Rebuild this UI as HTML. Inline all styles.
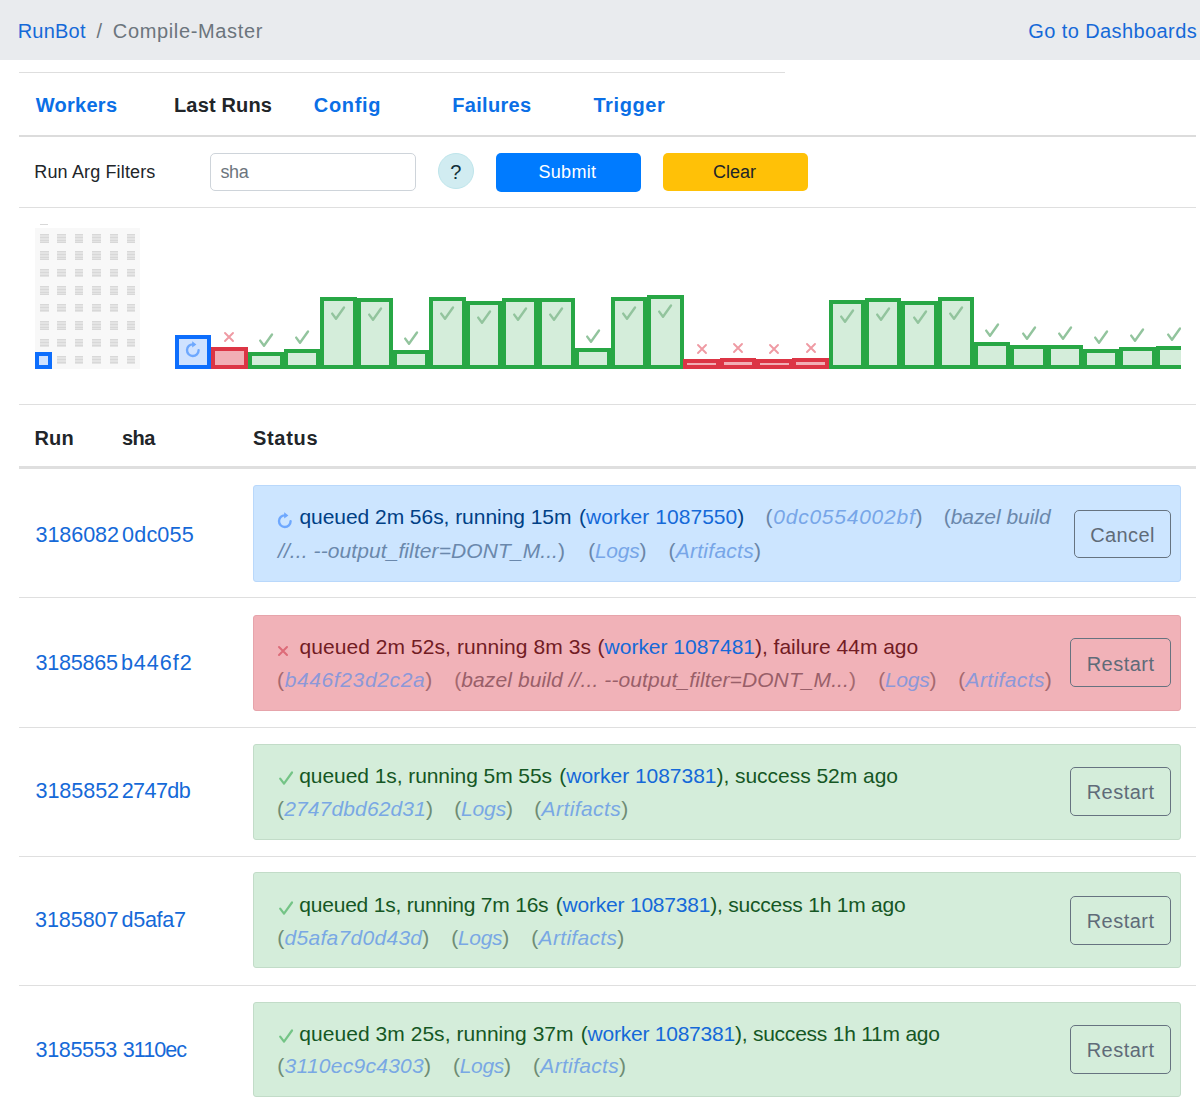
<!DOCTYPE html>
<html><head><meta charset="utf-8">
<style>
html,body{margin:0;padding:0;background:#fff;}
body{width:1200px;height:1108px;overflow:hidden;position:relative;font-family:"Liberation Sans",sans-serif;}
.t{position:absolute;white-space:pre;font-family:"Liberation Sans",sans-serif;}
</style></head><body>
<div style="position:absolute;left:0;top:0;width:1200px;height:59.8px;background:#e9ebee"></div>
<div style="position:absolute;left:19px;top:71.5px;width:766px;height:1.4px;box-sizing:border-box;background:#dedede"></div>
<div style="position:absolute;left:19px;top:134.6px;width:1177px;height:2px;box-sizing:border-box;background:#dcdcdc"></div>
<div style="position:absolute;left:19px;top:206.8px;width:1177px;height:1.4px;box-sizing:border-box;background:#dfdfdf"></div>
<div style="position:absolute;left:19px;top:403.8px;width:1177px;height:1.4px;box-sizing:border-box;background:#dfdfdf"></div>
<div style="position:absolute;left:19px;top:466.3px;width:1177px;height:2.7px;box-sizing:border-box;background:#dfdfdf"></div>
<div style="position:absolute;left:19px;top:597.0px;width:1177px;height:1.4px;box-sizing:border-box;background:#dfdfdf"></div>
<div style="position:absolute;left:19px;top:726.6px;width:1177px;height:1.4px;box-sizing:border-box;background:#dfdfdf"></div>
<div style="position:absolute;left:19px;top:855.6px;width:1177px;height:1.4px;box-sizing:border-box;background:#dfdfdf"></div>
<div style="position:absolute;left:19px;top:984.8px;width:1177px;height:1.4px;box-sizing:border-box;background:#dfdfdf"></div>
<div style="position:absolute;left:210px;top:153px;width:205.5px;height:38.3px;box-sizing:border-box;border:1.4px solid #ced4da;border-radius:5px;background:#fff"></div>
<div style="position:absolute;left:437.7px;top:153px;width:36px;height:36px;box-sizing:border-box;border:1.3px solid #bee5eb;border-radius:50%;background:#d1ecf1"></div>
<div style="position:absolute;left:496px;top:153px;width:145px;height:38.5px;box-sizing:border-box;border-radius:5px;background:#007bff"></div>
<div style="position:absolute;left:663px;top:153px;width:145px;height:38.3px;box-sizing:border-box;border-radius:5px;background:#ffc107"></div>
<div style="position:absolute;left:35px;top:228.4px;width:104.5px;height:140.2px;box-sizing:border-box;background:#f8f8f8"></div>
<div style="position:absolute;left:40px;top:224px;width:8px;height:1.2px;box-sizing:border-box;background:#d8d8d8"></div>
<div style="position:absolute;left:40.1px;top:234px;width:8.5px;height:8.5px;box-sizing:border-box;background:repeating-linear-gradient(180deg,#d8d8d8 0px,#d8d8d8 1.4px,#e4e4e4 1.4px,#e4e4e4 2.8px)"></div>
<div style="position:absolute;left:57.4px;top:234px;width:8.5px;height:8.5px;box-sizing:border-box;background:repeating-linear-gradient(180deg,#d8d8d8 0px,#d8d8d8 1.4px,#e4e4e4 1.4px,#e4e4e4 2.8px)"></div>
<div style="position:absolute;left:74.8px;top:234px;width:8.5px;height:8.5px;box-sizing:border-box;background:repeating-linear-gradient(180deg,#d8d8d8 0px,#d8d8d8 1.4px,#e4e4e4 1.4px,#e4e4e4 2.8px)"></div>
<div style="position:absolute;left:92.1px;top:234px;width:8.5px;height:8.5px;box-sizing:border-box;background:repeating-linear-gradient(180deg,#d8d8d8 0px,#d8d8d8 1.4px,#e4e4e4 1.4px,#e4e4e4 2.8px)"></div>
<div style="position:absolute;left:109.5px;top:234px;width:8.5px;height:8.5px;box-sizing:border-box;background:repeating-linear-gradient(180deg,#d8d8d8 0px,#d8d8d8 1.4px,#e4e4e4 1.4px,#e4e4e4 2.8px)"></div>
<div style="position:absolute;left:126.9px;top:234px;width:8.5px;height:8.5px;box-sizing:border-box;background:repeating-linear-gradient(180deg,#d8d8d8 0px,#d8d8d8 1.4px,#e4e4e4 1.4px,#e4e4e4 2.8px)"></div>
<div style="position:absolute;left:40.1px;top:251.4px;width:8.5px;height:8.5px;box-sizing:border-box;background:repeating-linear-gradient(180deg,#d8d8d8 0px,#d8d8d8 1.4px,#e4e4e4 1.4px,#e4e4e4 2.8px)"></div>
<div style="position:absolute;left:57.4px;top:251.4px;width:8.5px;height:8.5px;box-sizing:border-box;background:repeating-linear-gradient(180deg,#d8d8d8 0px,#d8d8d8 1.4px,#e4e4e4 1.4px,#e4e4e4 2.8px)"></div>
<div style="position:absolute;left:74.8px;top:251.4px;width:8.5px;height:8.5px;box-sizing:border-box;background:repeating-linear-gradient(180deg,#d8d8d8 0px,#d8d8d8 1.4px,#e4e4e4 1.4px,#e4e4e4 2.8px)"></div>
<div style="position:absolute;left:92.1px;top:251.4px;width:8.5px;height:8.5px;box-sizing:border-box;background:repeating-linear-gradient(180deg,#d8d8d8 0px,#d8d8d8 1.4px,#e4e4e4 1.4px,#e4e4e4 2.8px)"></div>
<div style="position:absolute;left:109.5px;top:251.4px;width:8.5px;height:8.5px;box-sizing:border-box;background:repeating-linear-gradient(180deg,#d8d8d8 0px,#d8d8d8 1.4px,#e4e4e4 1.4px,#e4e4e4 2.8px)"></div>
<div style="position:absolute;left:126.9px;top:251.4px;width:8.5px;height:8.5px;box-sizing:border-box;background:repeating-linear-gradient(180deg,#d8d8d8 0px,#d8d8d8 1.4px,#e4e4e4 1.4px,#e4e4e4 2.8px)"></div>
<div style="position:absolute;left:40.1px;top:268.9px;width:8.5px;height:8.5px;box-sizing:border-box;background:repeating-linear-gradient(180deg,#d8d8d8 0px,#d8d8d8 1.4px,#e4e4e4 1.4px,#e4e4e4 2.8px)"></div>
<div style="position:absolute;left:57.4px;top:268.9px;width:8.5px;height:8.5px;box-sizing:border-box;background:repeating-linear-gradient(180deg,#d8d8d8 0px,#d8d8d8 1.4px,#e4e4e4 1.4px,#e4e4e4 2.8px)"></div>
<div style="position:absolute;left:74.8px;top:268.9px;width:8.5px;height:8.5px;box-sizing:border-box;background:repeating-linear-gradient(180deg,#d8d8d8 0px,#d8d8d8 1.4px,#e4e4e4 1.4px,#e4e4e4 2.8px)"></div>
<div style="position:absolute;left:92.1px;top:268.9px;width:8.5px;height:8.5px;box-sizing:border-box;background:repeating-linear-gradient(180deg,#d8d8d8 0px,#d8d8d8 1.4px,#e4e4e4 1.4px,#e4e4e4 2.8px)"></div>
<div style="position:absolute;left:109.5px;top:268.9px;width:8.5px;height:8.5px;box-sizing:border-box;background:repeating-linear-gradient(180deg,#d8d8d8 0px,#d8d8d8 1.4px,#e4e4e4 1.4px,#e4e4e4 2.8px)"></div>
<div style="position:absolute;left:126.9px;top:268.9px;width:8.5px;height:8.5px;box-sizing:border-box;background:repeating-linear-gradient(180deg,#d8d8d8 0px,#d8d8d8 1.4px,#e4e4e4 1.4px,#e4e4e4 2.8px)"></div>
<div style="position:absolute;left:40.1px;top:286.3px;width:8.5px;height:8.5px;box-sizing:border-box;background:repeating-linear-gradient(180deg,#d8d8d8 0px,#d8d8d8 1.4px,#e4e4e4 1.4px,#e4e4e4 2.8px)"></div>
<div style="position:absolute;left:57.4px;top:286.3px;width:8.5px;height:8.5px;box-sizing:border-box;background:repeating-linear-gradient(180deg,#d8d8d8 0px,#d8d8d8 1.4px,#e4e4e4 1.4px,#e4e4e4 2.8px)"></div>
<div style="position:absolute;left:74.8px;top:286.3px;width:8.5px;height:8.5px;box-sizing:border-box;background:repeating-linear-gradient(180deg,#d8d8d8 0px,#d8d8d8 1.4px,#e4e4e4 1.4px,#e4e4e4 2.8px)"></div>
<div style="position:absolute;left:92.1px;top:286.3px;width:8.5px;height:8.5px;box-sizing:border-box;background:repeating-linear-gradient(180deg,#d8d8d8 0px,#d8d8d8 1.4px,#e4e4e4 1.4px,#e4e4e4 2.8px)"></div>
<div style="position:absolute;left:109.5px;top:286.3px;width:8.5px;height:8.5px;box-sizing:border-box;background:repeating-linear-gradient(180deg,#d8d8d8 0px,#d8d8d8 1.4px,#e4e4e4 1.4px,#e4e4e4 2.8px)"></div>
<div style="position:absolute;left:126.9px;top:286.3px;width:8.5px;height:8.5px;box-sizing:border-box;background:repeating-linear-gradient(180deg,#d8d8d8 0px,#d8d8d8 1.4px,#e4e4e4 1.4px,#e4e4e4 2.8px)"></div>
<div style="position:absolute;left:40.1px;top:303.7px;width:8.5px;height:8.5px;box-sizing:border-box;background:repeating-linear-gradient(180deg,#d8d8d8 0px,#d8d8d8 1.4px,#e4e4e4 1.4px,#e4e4e4 2.8px)"></div>
<div style="position:absolute;left:57.4px;top:303.7px;width:8.5px;height:8.5px;box-sizing:border-box;background:repeating-linear-gradient(180deg,#d8d8d8 0px,#d8d8d8 1.4px,#e4e4e4 1.4px,#e4e4e4 2.8px)"></div>
<div style="position:absolute;left:74.8px;top:303.7px;width:8.5px;height:8.5px;box-sizing:border-box;background:repeating-linear-gradient(180deg,#d8d8d8 0px,#d8d8d8 1.4px,#e4e4e4 1.4px,#e4e4e4 2.8px)"></div>
<div style="position:absolute;left:92.1px;top:303.7px;width:8.5px;height:8.5px;box-sizing:border-box;background:repeating-linear-gradient(180deg,#d8d8d8 0px,#d8d8d8 1.4px,#e4e4e4 1.4px,#e4e4e4 2.8px)"></div>
<div style="position:absolute;left:109.5px;top:303.7px;width:8.5px;height:8.5px;box-sizing:border-box;background:repeating-linear-gradient(180deg,#d8d8d8 0px,#d8d8d8 1.4px,#e4e4e4 1.4px,#e4e4e4 2.8px)"></div>
<div style="position:absolute;left:126.9px;top:303.7px;width:8.5px;height:8.5px;box-sizing:border-box;background:repeating-linear-gradient(180deg,#d8d8d8 0px,#d8d8d8 1.4px,#e4e4e4 1.4px,#e4e4e4 2.8px)"></div>
<div style="position:absolute;left:40.1px;top:321.1px;width:8.5px;height:8.5px;box-sizing:border-box;background:repeating-linear-gradient(180deg,#d8d8d8 0px,#d8d8d8 1.4px,#e4e4e4 1.4px,#e4e4e4 2.8px)"></div>
<div style="position:absolute;left:57.4px;top:321.1px;width:8.5px;height:8.5px;box-sizing:border-box;background:repeating-linear-gradient(180deg,#d8d8d8 0px,#d8d8d8 1.4px,#e4e4e4 1.4px,#e4e4e4 2.8px)"></div>
<div style="position:absolute;left:74.8px;top:321.1px;width:8.5px;height:8.5px;box-sizing:border-box;background:repeating-linear-gradient(180deg,#d8d8d8 0px,#d8d8d8 1.4px,#e4e4e4 1.4px,#e4e4e4 2.8px)"></div>
<div style="position:absolute;left:92.1px;top:321.1px;width:8.5px;height:8.5px;box-sizing:border-box;background:repeating-linear-gradient(180deg,#d8d8d8 0px,#d8d8d8 1.4px,#e4e4e4 1.4px,#e4e4e4 2.8px)"></div>
<div style="position:absolute;left:109.5px;top:321.1px;width:8.5px;height:8.5px;box-sizing:border-box;background:repeating-linear-gradient(180deg,#d8d8d8 0px,#d8d8d8 1.4px,#e4e4e4 1.4px,#e4e4e4 2.8px)"></div>
<div style="position:absolute;left:126.9px;top:321.1px;width:8.5px;height:8.5px;box-sizing:border-box;background:repeating-linear-gradient(180deg,#d8d8d8 0px,#d8d8d8 1.4px,#e4e4e4 1.4px,#e4e4e4 2.8px)"></div>
<div style="position:absolute;left:40.1px;top:338.5px;width:8.5px;height:8.5px;box-sizing:border-box;background:repeating-linear-gradient(180deg,#d8d8d8 0px,#d8d8d8 1.4px,#e4e4e4 1.4px,#e4e4e4 2.8px)"></div>
<div style="position:absolute;left:57.4px;top:338.5px;width:8.5px;height:8.5px;box-sizing:border-box;background:repeating-linear-gradient(180deg,#d8d8d8 0px,#d8d8d8 1.4px,#e4e4e4 1.4px,#e4e4e4 2.8px)"></div>
<div style="position:absolute;left:74.8px;top:338.5px;width:8.5px;height:8.5px;box-sizing:border-box;background:repeating-linear-gradient(180deg,#d8d8d8 0px,#d8d8d8 1.4px,#e4e4e4 1.4px,#e4e4e4 2.8px)"></div>
<div style="position:absolute;left:92.1px;top:338.5px;width:8.5px;height:8.5px;box-sizing:border-box;background:repeating-linear-gradient(180deg,#d8d8d8 0px,#d8d8d8 1.4px,#e4e4e4 1.4px,#e4e4e4 2.8px)"></div>
<div style="position:absolute;left:109.5px;top:338.5px;width:8.5px;height:8.5px;box-sizing:border-box;background:repeating-linear-gradient(180deg,#d8d8d8 0px,#d8d8d8 1.4px,#e4e4e4 1.4px,#e4e4e4 2.8px)"></div>
<div style="position:absolute;left:126.9px;top:338.5px;width:8.5px;height:8.5px;box-sizing:border-box;background:repeating-linear-gradient(180deg,#d8d8d8 0px,#d8d8d8 1.4px,#e4e4e4 1.4px,#e4e4e4 2.8px)"></div>
<div style="position:absolute;left:57.4px;top:355.9px;width:8.5px;height:8.5px;box-sizing:border-box;background:repeating-linear-gradient(180deg,#d8d8d8 0px,#d8d8d8 1.4px,#e4e4e4 1.4px,#e4e4e4 2.8px)"></div>
<div style="position:absolute;left:74.8px;top:355.9px;width:8.5px;height:8.5px;box-sizing:border-box;background:repeating-linear-gradient(180deg,#d8d8d8 0px,#d8d8d8 1.4px,#e4e4e4 1.4px,#e4e4e4 2.8px)"></div>
<div style="position:absolute;left:92.1px;top:355.9px;width:8.5px;height:8.5px;box-sizing:border-box;background:repeating-linear-gradient(180deg,#d8d8d8 0px,#d8d8d8 1.4px,#e4e4e4 1.4px,#e4e4e4 2.8px)"></div>
<div style="position:absolute;left:109.5px;top:355.9px;width:8.5px;height:8.5px;box-sizing:border-box;background:repeating-linear-gradient(180deg,#d8d8d8 0px,#d8d8d8 1.4px,#e4e4e4 1.4px,#e4e4e4 2.8px)"></div>
<div style="position:absolute;left:126.9px;top:355.9px;width:8.5px;height:8.5px;box-sizing:border-box;background:repeating-linear-gradient(180deg,#d8d8d8 0px,#d8d8d8 1.4px,#e4e4e4 1.4px,#e4e4e4 2.8px)"></div>
<div style="position:absolute;left:35.2px;top:352px;width:17.3px;height:17px;box-sizing:border-box;border:4px solid #0d6efd;background:#cfe2ff"></div>
<div style="position:absolute;left:175px;top:280px;width:1006.3px;height:90px;overflow:hidden"><div style="position:absolute;left:0.00px;top:54.60px;width:36.42px;height:34.10px;box-sizing:border-box;border:4px solid #0d6efd;background:#cfe2ff"></div><svg width="14" height="16" viewBox="0 0 14 16" style="position:absolute;left:11.16px;top:61.00px;overflow:visible"><path d="M12.6 9.2 A5.8 5.8 0 1 1 7 3.4" fill="none" stroke="#6ea8fe" stroke-width="2.4" stroke-linecap="round"/><path d="M6.2 0.3 L10.4 3.4 L6.2 6.5 Z" fill="#6ea8fe"/></svg><div style="position:absolute;left:36.32px;top:67.40px;width:36.42px;height:21.30px;box-sizing:border-box;border:4px solid #dc3545;background:#f1aeb5"></div><svg width="10" height="10" viewBox="0 0 10 10" style="position:absolute;left:49.48px;top:52.40px;overflow:visible"><path d="M1 1 L9 9 M9 1 L1 9" fill="none" stroke="#ef9aa3" stroke-width="1.9" stroke-linecap="round"/></svg><div style="position:absolute;left:72.64px;top:72.00px;width:36.42px;height:16.70px;box-sizing:border-box;border:4px solid #28a745;background:#d4edda"></div><svg width="14" height="14" viewBox="0 0 14 14" style="position:absolute;left:83.80px;top:53.00px;overflow:visible"><path d="M1.2 7.6 L5 12.7 L13 1.5" fill="none" stroke="#92c49d" stroke-width="2.4" stroke-linecap="round" stroke-linejoin="round"/></svg><div style="position:absolute;left:108.96px;top:69.00px;width:36.42px;height:19.70px;box-sizing:border-box;border:4px solid #28a745;background:#d4edda"></div><svg width="14" height="14" viewBox="0 0 14 14" style="position:absolute;left:120.12px;top:50.00px;overflow:visible"><path d="M1.2 7.6 L5 12.7 L13 1.5" fill="none" stroke="#92c49d" stroke-width="2.4" stroke-linecap="round" stroke-linejoin="round"/></svg><div style="position:absolute;left:145.28px;top:16.70px;width:36.42px;height:72.00px;box-sizing:border-box;border:4px solid #28a745;background:#d4edda"></div><svg width="14" height="14" viewBox="0 0 14 14" style="position:absolute;left:156.44px;top:25.70px;overflow:visible"><path d="M1.2 7.6 L5 12.7 L13 1.5" fill="none" stroke="#92c49d" stroke-width="2.4" stroke-linecap="round" stroke-linejoin="round"/></svg><div style="position:absolute;left:181.60px;top:18.00px;width:36.42px;height:70.70px;box-sizing:border-box;border:4px solid #28a745;background:#d4edda"></div><svg width="14" height="14" viewBox="0 0 14 14" style="position:absolute;left:192.76px;top:27.00px;overflow:visible"><path d="M1.2 7.6 L5 12.7 L13 1.5" fill="none" stroke="#92c49d" stroke-width="2.4" stroke-linecap="round" stroke-linejoin="round"/></svg><div style="position:absolute;left:217.92px;top:70.30px;width:36.42px;height:18.40px;box-sizing:border-box;border:4px solid #28a745;background:#d4edda"></div><svg width="14" height="14" viewBox="0 0 14 14" style="position:absolute;left:229.08px;top:51.30px;overflow:visible"><path d="M1.2 7.6 L5 12.7 L13 1.5" fill="none" stroke="#92c49d" stroke-width="2.4" stroke-linecap="round" stroke-linejoin="round"/></svg><div style="position:absolute;left:254.24px;top:16.70px;width:36.42px;height:72.00px;box-sizing:border-box;border:4px solid #28a745;background:#d4edda"></div><svg width="14" height="14" viewBox="0 0 14 14" style="position:absolute;left:265.40px;top:25.70px;overflow:visible"><path d="M1.2 7.6 L5 12.7 L13 1.5" fill="none" stroke="#92c49d" stroke-width="2.4" stroke-linecap="round" stroke-linejoin="round"/></svg><div style="position:absolute;left:290.56px;top:21.30px;width:36.42px;height:67.40px;box-sizing:border-box;border:4px solid #28a745;background:#d4edda"></div><svg width="14" height="14" viewBox="0 0 14 14" style="position:absolute;left:301.72px;top:30.30px;overflow:visible"><path d="M1.2 7.6 L5 12.7 L13 1.5" fill="none" stroke="#92c49d" stroke-width="2.4" stroke-linecap="round" stroke-linejoin="round"/></svg><div style="position:absolute;left:326.88px;top:18.30px;width:36.42px;height:70.40px;box-sizing:border-box;border:4px solid #28a745;background:#d4edda"></div><svg width="14" height="14" viewBox="0 0 14 14" style="position:absolute;left:338.04px;top:27.30px;overflow:visible"><path d="M1.2 7.6 L5 12.7 L13 1.5" fill="none" stroke="#92c49d" stroke-width="2.4" stroke-linecap="round" stroke-linejoin="round"/></svg><div style="position:absolute;left:363.20px;top:18.30px;width:36.42px;height:70.40px;box-sizing:border-box;border:4px solid #28a745;background:#d4edda"></div><svg width="14" height="14" viewBox="0 0 14 14" style="position:absolute;left:374.36px;top:27.30px;overflow:visible"><path d="M1.2 7.6 L5 12.7 L13 1.5" fill="none" stroke="#92c49d" stroke-width="2.4" stroke-linecap="round" stroke-linejoin="round"/></svg><div style="position:absolute;left:399.52px;top:67.70px;width:36.42px;height:21.00px;box-sizing:border-box;border:4px solid #28a745;background:#d4edda"></div><svg width="14" height="14" viewBox="0 0 14 14" style="position:absolute;left:410.68px;top:48.70px;overflow:visible"><path d="M1.2 7.6 L5 12.7 L13 1.5" fill="none" stroke="#92c49d" stroke-width="2.4" stroke-linecap="round" stroke-linejoin="round"/></svg><div style="position:absolute;left:435.84px;top:17.00px;width:36.42px;height:71.70px;box-sizing:border-box;border:4px solid #28a745;background:#d4edda"></div><svg width="14" height="14" viewBox="0 0 14 14" style="position:absolute;left:447.00px;top:26.00px;overflow:visible"><path d="M1.2 7.6 L5 12.7 L13 1.5" fill="none" stroke="#92c49d" stroke-width="2.4" stroke-linecap="round" stroke-linejoin="round"/></svg><div style="position:absolute;left:472.16px;top:15.00px;width:36.42px;height:73.70px;box-sizing:border-box;border:4px solid #28a745;background:#d4edda"></div><svg width="14" height="14" viewBox="0 0 14 14" style="position:absolute;left:483.32px;top:24.00px;overflow:visible"><path d="M1.2 7.6 L5 12.7 L13 1.5" fill="none" stroke="#92c49d" stroke-width="2.4" stroke-linecap="round" stroke-linejoin="round"/></svg><div style="position:absolute;left:508.48px;top:79.00px;width:36.42px;height:9.70px;box-sizing:border-box;border:4px solid #dc3545;background:#f1aeb5"></div><svg width="10" height="10" viewBox="0 0 10 10" style="position:absolute;left:521.64px;top:64.00px;overflow:visible"><path d="M1 1 L9 9 M9 1 L1 9" fill="none" stroke="#ef9aa3" stroke-width="1.9" stroke-linecap="round"/></svg><div style="position:absolute;left:544.80px;top:77.70px;width:36.42px;height:11.00px;box-sizing:border-box;border:4px solid #dc3545;background:#f1aeb5"></div><svg width="10" height="10" viewBox="0 0 10 10" style="position:absolute;left:557.96px;top:62.70px;overflow:visible"><path d="M1 1 L9 9 M9 1 L1 9" fill="none" stroke="#ef9aa3" stroke-width="1.9" stroke-linecap="round"/></svg><div style="position:absolute;left:581.12px;top:79.00px;width:36.42px;height:9.70px;box-sizing:border-box;border:4px solid #dc3545;background:#f1aeb5"></div><svg width="10" height="10" viewBox="0 0 10 10" style="position:absolute;left:594.28px;top:64.00px;overflow:visible"><path d="M1 1 L9 9 M9 1 L1 9" fill="none" stroke="#ef9aa3" stroke-width="1.9" stroke-linecap="round"/></svg><div style="position:absolute;left:617.44px;top:77.70px;width:36.42px;height:11.00px;box-sizing:border-box;border:4px solid #dc3545;background:#f1aeb5"></div><svg width="10" height="10" viewBox="0 0 10 10" style="position:absolute;left:630.60px;top:62.70px;overflow:visible"><path d="M1 1 L9 9 M9 1 L1 9" fill="none" stroke="#ef9aa3" stroke-width="1.9" stroke-linecap="round"/></svg><div style="position:absolute;left:653.76px;top:19.70px;width:36.42px;height:69.00px;box-sizing:border-box;border:4px solid #28a745;background:#d4edda"></div><svg width="14" height="14" viewBox="0 0 14 14" style="position:absolute;left:664.92px;top:28.70px;overflow:visible"><path d="M1.2 7.6 L5 12.7 L13 1.5" fill="none" stroke="#92c49d" stroke-width="2.4" stroke-linecap="round" stroke-linejoin="round"/></svg><div style="position:absolute;left:690.08px;top:18.00px;width:36.42px;height:70.70px;box-sizing:border-box;border:4px solid #28a745;background:#d4edda"></div><svg width="14" height="14" viewBox="0 0 14 14" style="position:absolute;left:701.24px;top:27.00px;overflow:visible"><path d="M1.2 7.6 L5 12.7 L13 1.5" fill="none" stroke="#92c49d" stroke-width="2.4" stroke-linecap="round" stroke-linejoin="round"/></svg><div style="position:absolute;left:726.40px;top:21.30px;width:36.42px;height:67.40px;box-sizing:border-box;border:4px solid #28a745;background:#d4edda"></div><svg width="14" height="14" viewBox="0 0 14 14" style="position:absolute;left:737.56px;top:30.30px;overflow:visible"><path d="M1.2 7.6 L5 12.7 L13 1.5" fill="none" stroke="#92c49d" stroke-width="2.4" stroke-linecap="round" stroke-linejoin="round"/></svg><div style="position:absolute;left:762.72px;top:17.00px;width:36.42px;height:71.70px;box-sizing:border-box;border:4px solid #28a745;background:#d4edda"></div><svg width="14" height="14" viewBox="0 0 14 14" style="position:absolute;left:773.88px;top:26.00px;overflow:visible"><path d="M1.2 7.6 L5 12.7 L13 1.5" fill="none" stroke="#92c49d" stroke-width="2.4" stroke-linecap="round" stroke-linejoin="round"/></svg><div style="position:absolute;left:799.04px;top:62.00px;width:36.42px;height:26.70px;box-sizing:border-box;border:4px solid #28a745;background:#d4edda"></div><svg width="14" height="14" viewBox="0 0 14 14" style="position:absolute;left:810.20px;top:43.00px;overflow:visible"><path d="M1.2 7.6 L5 12.7 L13 1.5" fill="none" stroke="#92c49d" stroke-width="2.4" stroke-linecap="round" stroke-linejoin="round"/></svg><div style="position:absolute;left:835.36px;top:65.00px;width:36.42px;height:23.70px;box-sizing:border-box;border:4px solid #28a745;background:#d4edda"></div><svg width="14" height="14" viewBox="0 0 14 14" style="position:absolute;left:846.52px;top:46.00px;overflow:visible"><path d="M1.2 7.6 L5 12.7 L13 1.5" fill="none" stroke="#92c49d" stroke-width="2.4" stroke-linecap="round" stroke-linejoin="round"/></svg><div style="position:absolute;left:871.68px;top:64.70px;width:36.42px;height:24.00px;box-sizing:border-box;border:4px solid #28a745;background:#d4edda"></div><svg width="14" height="14" viewBox="0 0 14 14" style="position:absolute;left:882.84px;top:45.70px;overflow:visible"><path d="M1.2 7.6 L5 12.7 L13 1.5" fill="none" stroke="#92c49d" stroke-width="2.4" stroke-linecap="round" stroke-linejoin="round"/></svg><div style="position:absolute;left:908.00px;top:69.00px;width:36.42px;height:19.70px;box-sizing:border-box;border:4px solid #28a745;background:#d4edda"></div><svg width="14" height="14" viewBox="0 0 14 14" style="position:absolute;left:919.16px;top:50.00px;overflow:visible"><path d="M1.2 7.6 L5 12.7 L13 1.5" fill="none" stroke="#92c49d" stroke-width="2.4" stroke-linecap="round" stroke-linejoin="round"/></svg><div style="position:absolute;left:944.32px;top:67.40px;width:36.42px;height:21.30px;box-sizing:border-box;border:4px solid #28a745;background:#d4edda"></div><svg width="14" height="14" viewBox="0 0 14 14" style="position:absolute;left:955.48px;top:48.40px;overflow:visible"><path d="M1.2 7.6 L5 12.7 L13 1.5" fill="none" stroke="#92c49d" stroke-width="2.4" stroke-linecap="round" stroke-linejoin="round"/></svg><div style="position:absolute;left:980.64px;top:66.00px;width:36.42px;height:22.70px;box-sizing:border-box;border:4px solid #28a745;background:#d4edda"></div><svg width="14" height="14" viewBox="0 0 14 14" style="position:absolute;left:991.80px;top:47.00px;overflow:visible"><path d="M1.2 7.6 L5 12.7 L13 1.5" fill="none" stroke="#92c49d" stroke-width="2.4" stroke-linecap="round" stroke-linejoin="round"/></svg></div>
<div style="position:absolute;left:253.3px;top:485.3px;width:927.7px;height:96.69999999999999px;box-sizing:border-box;background:#cce5ff;border:1px solid #b9d8fb;border-radius:3px"></div>
<div style="position:absolute;left:1074px;top:510px;width:96.70000000000005px;height:47.700000000000045px;box-sizing:border-box;border:1.4px solid #667380;border-radius:5px"></div>
<svg width="14" height="16" viewBox="0 0 14 16" style="position:absolute;left:277.7px;top:511.5px;overflow:visible"><path d="M12.6 9.2 A5.8 5.8 0 1 1 7 3.4" fill="none" stroke="#6ea8fe" stroke-width="2.4" stroke-linecap="round"/><path d="M6.2 0.3 L10.4 3.4 L6.2 6.5 Z" fill="#6ea8fe"/></svg>
<div style="position:absolute;left:253.3px;top:615.2px;width:927.7px;height:95.79999999999995px;box-sizing:border-box;background:#f1b2b8;border:1px solid #e6a4ab;border-radius:3px"></div>
<div style="position:absolute;left:1069.6px;top:638px;width:101.40000000000009px;height:48.700000000000045px;box-sizing:border-box;border:1.4px solid #667380;border-radius:5px"></div>
<svg width="10" height="10" viewBox="0 0 10 10" style="position:absolute;left:278px;top:646px;overflow:visible"><path d="M1 1 L9 9 M9 1 L1 9" fill="none" stroke="#dd6b78" stroke-width="2.0" stroke-linecap="round"/></svg>
<div style="position:absolute;left:253.3px;top:744px;width:927.7px;height:95.60000000000002px;box-sizing:border-box;background:#d4edda;border:1px solid #c2dcc8;border-radius:3px"></div>
<div style="position:absolute;left:1069.6px;top:767.3px;width:101.40000000000009px;height:48.700000000000045px;box-sizing:border-box;border:1.4px solid #667380;border-radius:5px"></div>
<svg width="14" height="14" viewBox="0 0 14 14" style="position:absolute;left:278.5px;top:771.3px;overflow:visible"><path d="M1.2 7.6 L5 12.7 L13 1.5" fill="none" stroke="#74c486" stroke-width="2.2" stroke-linecap="round" stroke-linejoin="round"/></svg>
<div style="position:absolute;left:253.3px;top:872.3px;width:927.7px;height:96.0px;box-sizing:border-box;background:#d4edda;border:1px solid #c2dcc8;border-radius:3px"></div>
<div style="position:absolute;left:1069.6px;top:896px;width:101.40000000000009px;height:48.700000000000045px;box-sizing:border-box;border:1.4px solid #667380;border-radius:5px"></div>
<svg width="14" height="14" viewBox="0 0 14 14" style="position:absolute;left:278.5px;top:900.5px;overflow:visible"><path d="M1.2 7.6 L5 12.7 L13 1.5" fill="none" stroke="#74c486" stroke-width="2.2" stroke-linecap="round" stroke-linejoin="round"/></svg>
<div style="position:absolute;left:253.3px;top:1001.5px;width:927.7px;height:95.79999999999995px;box-sizing:border-box;background:#d4edda;border:1px solid #c2dcc8;border-radius:3px"></div>
<div style="position:absolute;left:1069.6px;top:1025.2px;width:101.40000000000009px;height:48.700000000000045px;box-sizing:border-box;border:1.4px solid #667380;border-radius:5px"></div>
<svg width="14" height="14" viewBox="0 0 14 14" style="position:absolute;left:278.5px;top:1029.3px;overflow:visible"><path d="M1.2 7.6 L5 12.7 L13 1.5" fill="none" stroke="#74c486" stroke-width="2.2" stroke-linecap="round" stroke-linejoin="round"/></svg>
<div class="t" style="left:17.70px;top:21.20px;font-size:20px;line-height:20px;font-weight:400;font-style:normal;color:#1569d8;letter-spacing:0.210px">RunBot</div>
<div class="t" style="left:96.50px;top:21.20px;font-size:20px;line-height:20px;font-weight:400;font-style:normal;color:#6c757d;letter-spacing:0.000px">/</div>
<div class="t" style="left:112.80px;top:21.20px;font-size:20px;line-height:20px;font-weight:400;font-style:normal;color:#6c757d;letter-spacing:0.648px">Compile-Master</div>
<div class="t" style="left:1028.30px;top:21.20px;font-size:20px;line-height:20px;font-weight:400;font-style:normal;color:#1569d8;letter-spacing:0.406px">Go to Dashboards</div>
<div class="t" style="left:35.80px;top:94.80px;font-size:20px;line-height:20px;font-weight:700;font-style:normal;color:#0b6fe6;letter-spacing:0.259px">Workers</div>
<div class="t" style="left:174.00px;top:94.80px;font-size:20px;line-height:20px;font-weight:700;font-style:normal;color:#212529;letter-spacing:0.155px">Last Runs</div>
<div class="t" style="left:313.80px;top:94.80px;font-size:20px;line-height:20px;font-weight:700;font-style:normal;color:#0b6fe6;letter-spacing:0.661px">Config</div>
<div class="t" style="left:452.30px;top:94.80px;font-size:20px;line-height:20px;font-weight:700;font-style:normal;color:#0b6fe6;letter-spacing:0.303px">Failures</div>
<div class="t" style="left:593.40px;top:94.80px;font-size:20px;line-height:20px;font-weight:700;font-style:normal;color:#0b6fe6;letter-spacing:0.598px">Trigger</div>
<div class="t" style="left:34.30px;top:162.50px;font-size:18px;line-height:18px;font-weight:400;font-style:normal;color:#212529;letter-spacing:0.141px">Run Arg Filters</div>
<div class="t" style="left:220.50px;top:162.80px;font-size:18px;line-height:18px;font-weight:400;font-style:normal;color:#6c757d;letter-spacing:-0.405px">sha</div>
<div class="t" style="left:538.50px;top:162.50px;font-size:18px;line-height:18px;font-weight:400;font-style:normal;color:#ffffff;letter-spacing:0.296px">Submit</div>
<div class="t" style="left:713.00px;top:162.50px;font-size:18px;line-height:18px;font-weight:400;font-style:normal;color:#212529;letter-spacing:-0.030px">Clear</div>
<div class="t" style="left:450.20px;top:162.00px;font-size:20px;line-height:20px;font-weight:400;font-style:normal;color:#10303a;letter-spacing:0.000px">?</div>
<div class="t" style="left:34.50px;top:427.60px;font-size:20px;line-height:20px;font-weight:700;font-style:normal;color:#212529;letter-spacing:0.170px">Run</div>
<div class="t" style="left:122.00px;top:427.60px;font-size:20px;line-height:20px;font-weight:700;font-style:normal;color:#212529;letter-spacing:-0.545px">sha</div>
<div class="t" style="left:252.90px;top:427.60px;font-size:20px;line-height:20px;font-weight:700;font-style:normal;color:#212529;letter-spacing:0.720px">Status</div>
<div class="t" style="left:35.50px;top:523.70px;font-size:21.6px;line-height:21.6px;font-weight:400;font-style:normal;color:#1569d8;letter-spacing:-0.093px">3186082</div>
<div class="t" style="left:122.00px;top:523.70px;font-size:21.6px;line-height:21.6px;font-weight:400;font-style:normal;color:#1569d8;letter-spacing:0.183px">0dc055</div>
<div class="t" style="left:35.50px;top:652.40px;font-size:21.6px;line-height:21.6px;font-weight:400;font-style:normal;color:#1569d8;letter-spacing:-0.243px">3185865</div>
<div class="t" style="left:120.90px;top:652.40px;font-size:21.6px;line-height:21.6px;font-weight:400;font-style:normal;color:#1569d8;letter-spacing:0.953px">b446f2</div>
<div class="t" style="left:35.50px;top:779.80px;font-size:21.6px;line-height:21.6px;font-weight:400;font-style:normal;color:#1569d8;letter-spacing:-0.076px">3185852</div>
<div class="t" style="left:121.70px;top:779.80px;font-size:21.6px;line-height:21.6px;font-weight:400;font-style:normal;color:#1569d8;letter-spacing:-0.609px">2747db</div>
<div class="t" style="left:35.00px;top:909.20px;font-size:21.6px;line-height:21.6px;font-weight:400;font-style:normal;color:#1569d8;letter-spacing:-0.093px">3185807</div>
<div class="t" style="left:121.50px;top:909.20px;font-size:21.6px;line-height:21.6px;font-weight:400;font-style:normal;color:#1569d8;letter-spacing:-0.307px">d5afa7</div>
<div class="t" style="left:35.50px;top:1039.00px;font-size:21.6px;line-height:21.6px;font-weight:400;font-style:normal;color:#1569d8;letter-spacing:-0.376px">3185553</div>
<div class="t" style="left:122.70px;top:1039.00px;font-size:21.6px;line-height:21.6px;font-weight:400;font-style:normal;color:#1569d8;letter-spacing:-0.989px">3110ec</div>
<div class="t" style="left:1090.30px;top:525.00px;font-size:20px;line-height:20px;font-weight:400;font-style:normal;color:#5f6b78;letter-spacing:0.378px">Cancel</div>
<div class="t" style="left:299.40px;top:506.20px;font-size:21px;line-height:21px;font-weight:400;font-style:normal;color:#004085;letter-spacing:-0.044px">queued 2m 56s, running 15m</div>
<div class="t" style="left:579.00px;top:506.20px;font-size:21px;line-height:21px;font-weight:400;font-style:normal;color:#004085;letter-spacing:0.047px"><span style="color:#004085;font-style:normal">(</span><span style="color:#1569d8;font-style:normal">worker 1087550</span><span style="color:#004085;font-style:normal">)</span></div>
<div class="t" style="left:765.50px;top:506.20px;font-size:21px;line-height:21px;font-weight:400;font-style:italic;color:#6a86a8;letter-spacing:0.760px"><span style="color:#6a86a8;font-style:normal">(</span><span style="color:#77a6e8;font-style:italic">0dc0554002bf</span><span style="color:#6a86a8;font-style:normal">)</span></div>
<div class="t" style="left:943.70px;top:506.20px;font-size:21px;line-height:21px;font-weight:400;font-style:italic;color:#6a86a8;letter-spacing:-0.047px"><span style="color:#6a86a8;font-style:normal">(</span><span style="color:#6a88ac;font-style:italic">bazel build</span></div>
<div class="t" style="left:278.00px;top:539.80px;font-size:21px;line-height:21px;font-weight:400;font-style:italic;color:#6a88ac;letter-spacing:0.092px"><span style="color:#6a88ac;font-style:italic">//... --output_filter=DONT_M...</span><span style="color:#6a86a8;font-style:normal">)</span></div>
<div class="t" style="left:588.20px;top:539.80px;font-size:21px;line-height:21px;font-weight:400;font-style:italic;color:#6a86a8;letter-spacing:-0.266px"><span style="color:#6a86a8;font-style:normal">(</span><span style="color:#77a6e8;font-style:italic">Logs</span><span style="color:#6a86a8;font-style:normal">)</span></div>
<div class="t" style="left:668.40px;top:539.80px;font-size:21px;line-height:21px;font-weight:400;font-style:italic;color:#6a86a8;letter-spacing:0.276px"><span style="color:#6a86a8;font-style:normal">(</span><span style="color:#77a6e8;font-style:italic">Artifacts</span><span style="color:#6a86a8;font-style:normal">)</span></div>
<div class="t" style="left:1086.70px;top:654.00px;font-size:20px;line-height:20px;font-weight:400;font-style:normal;color:#5f6b78;letter-spacing:0.466px">Restart</div>
<div class="t" style="left:299.40px;top:635.75px;font-size:21px;line-height:21px;font-weight:400;font-style:normal;color:#721c24;letter-spacing:0.073px">queued 2m 52s, running 8m 3s</div>
<div class="t" style="left:597.60px;top:635.75px;font-size:21px;line-height:21px;font-weight:400;font-style:normal;color:#721c24;letter-spacing:-0.013px"><span style="color:#721c24;font-style:normal">(</span><span style="color:#1569d8;font-style:normal">worker 1087481</span><span style="color:#721c24;font-style:normal">), failure 44m ago</span></div>
<div class="t" style="left:277.00px;top:669.00px;font-size:21px;line-height:21px;font-weight:400;font-style:italic;color:#a5696f;letter-spacing:0.625px"><span style="color:#a5696f;font-style:normal">(</span><span style="color:#8c98d8;font-style:italic">b446f23d2c2a</span><span style="color:#a5696f;font-style:normal">)</span></div>
<div class="t" style="left:454.20px;top:669.00px;font-size:21px;line-height:21px;font-weight:400;font-style:italic;color:#a5696f;letter-spacing:0.100px"><span style="color:#a5696f;font-style:normal">(</span><span style="color:#995f69;font-style:italic">bazel build //... --output_filter=DONT_M...</span><span style="color:#a5696f;font-style:normal">)</span></div>
<div class="t" style="left:878.20px;top:669.00px;font-size:21px;line-height:21px;font-weight:400;font-style:italic;color:#a5696f;letter-spacing:-0.266px"><span style="color:#a5696f;font-style:normal">(</span><span style="color:#8c98d8;font-style:italic">Logs</span><span style="color:#a5696f;font-style:normal">)</span></div>
<div class="t" style="left:958.20px;top:669.00px;font-size:21px;line-height:21px;font-weight:400;font-style:italic;color:#a5696f;letter-spacing:0.376px"><span style="color:#a5696f;font-style:normal">(</span><span style="color:#8c98d8;font-style:italic">Artifacts</span><span style="color:#a5696f;font-style:normal">)</span></div>
<div class="t" style="left:1086.70px;top:781.70px;font-size:20px;line-height:20px;font-weight:400;font-style:normal;color:#5f6b78;letter-spacing:0.466px">Restart</div>
<div class="t" style="left:299.20px;top:764.80px;font-size:21px;line-height:21px;font-weight:400;font-style:normal;color:#155724;letter-spacing:-0.067px">queued 1s, running 5m 55s</div>
<div class="t" style="left:559.30px;top:764.80px;font-size:21px;line-height:21px;font-weight:400;font-style:normal;color:#155724;letter-spacing:-0.031px"><span style="color:#155724;font-style:normal">(</span><span style="color:#1569d8;font-style:normal">worker 1087381</span><span style="color:#155724;font-style:normal">), success 52m ago</span></div>
<div class="t" style="left:277.00px;top:798.20px;font-size:21px;line-height:21px;font-weight:400;font-style:italic;color:#6e8c74;letter-spacing:0.143px"><span style="color:#6e8c74;font-style:normal">(</span><span style="color:#79a8e4;font-style:italic">2747dbd62d31</span><span style="color:#6e8c74;font-style:normal">)</span></div>
<div class="t" style="left:454.20px;top:798.20px;font-size:21px;line-height:21px;font-weight:400;font-style:italic;color:#6e8c74;letter-spacing:-0.146px"><span style="color:#6e8c74;font-style:normal">(</span><span style="color:#79a8e4;font-style:italic">Logs</span><span style="color:#6e8c74;font-style:normal">)</span></div>
<div class="t" style="left:534.20px;top:798.20px;font-size:21px;line-height:21px;font-weight:400;font-style:italic;color:#6e8c74;letter-spacing:0.416px"><span style="color:#6e8c74;font-style:normal">(</span><span style="color:#79a8e4;font-style:italic">Artifacts</span><span style="color:#6e8c74;font-style:normal">)</span></div>
<div class="t" style="left:1086.70px;top:910.50px;font-size:20px;line-height:20px;font-weight:400;font-style:normal;color:#5f6b78;letter-spacing:0.466px">Restart</div>
<div class="t" style="left:299.30px;top:894.00px;font-size:21px;line-height:21px;font-weight:400;font-style:normal;color:#155724;letter-spacing:-0.217px">queued 1s, running 7m 16s</div>
<div class="t" style="left:555.80px;top:894.00px;font-size:21px;line-height:21px;font-weight:400;font-style:normal;color:#155724;letter-spacing:-0.215px"><span style="color:#155724;font-style:normal">(</span><span style="color:#1569d8;font-style:normal">worker 1087381</span><span style="color:#155724;font-style:normal">), success 1h 1m ago</span></div>
<div class="t" style="left:277.30px;top:926.80px;font-size:21px;line-height:21px;font-weight:400;font-style:italic;color:#6e8c74;letter-spacing:0.285px"><span style="color:#6e8c74;font-style:normal">(</span><span style="color:#79a8e4;font-style:italic">d5afa7d0d43d</span><span style="color:#6e8c74;font-style:normal">)</span></div>
<div class="t" style="left:451.30px;top:926.80px;font-size:21px;line-height:21px;font-weight:400;font-style:italic;color:#6e8c74;letter-spacing:-0.306px"><span style="color:#6e8c74;font-style:normal">(</span><span style="color:#79a8e4;font-style:italic">Logs</span><span style="color:#6e8c74;font-style:normal">)</span></div>
<div class="t" style="left:531.30px;top:926.80px;font-size:21px;line-height:21px;font-weight:400;font-style:italic;color:#6e8c74;letter-spacing:0.316px"><span style="color:#6e8c74;font-style:normal">(</span><span style="color:#79a8e4;font-style:italic">Artifacts</span><span style="color:#6e8c74;font-style:normal">)</span></div>
<div class="t" style="left:1086.70px;top:1039.70px;font-size:20px;line-height:20px;font-weight:400;font-style:normal;color:#5f6b78;letter-spacing:0.466px">Restart</div>
<div class="t" style="left:299.30px;top:1022.80px;font-size:21px;line-height:21px;font-weight:400;font-style:normal;color:#155724;letter-spacing:0.044px">queued 3m 25s, running 37m</div>
<div class="t" style="left:580.80px;top:1022.80px;font-size:21px;line-height:21px;font-weight:400;font-style:normal;color:#155724;letter-spacing:-0.232px"><span style="color:#155724;font-style:normal">(</span><span style="color:#1569d8;font-style:normal">worker 1087381</span><span style="color:#155724;font-style:normal">), success 1h 11m ago</span></div>
<div class="t" style="left:277.30px;top:1054.80px;font-size:21px;line-height:21px;font-weight:400;font-style:italic;color:#6e8c74;letter-spacing:0.267px"><span style="color:#6e8c74;font-style:normal">(</span><span style="color:#79a8e4;font-style:italic">3110ec9c4303</span><span style="color:#6e8c74;font-style:normal">)</span></div>
<div class="t" style="left:453.00px;top:1054.80px;font-size:21px;line-height:21px;font-weight:400;font-style:italic;color:#6e8c74;letter-spacing:-0.306px"><span style="color:#6e8c74;font-style:normal">(</span><span style="color:#79a8e4;font-style:italic">Logs</span><span style="color:#6e8c74;font-style:normal">)</span></div>
<div class="t" style="left:533.00px;top:1054.80px;font-size:21px;line-height:21px;font-weight:400;font-style:italic;color:#6e8c74;letter-spacing:0.316px"><span style="color:#6e8c74;font-style:normal">(</span><span style="color:#79a8e4;font-style:italic">Artifacts</span><span style="color:#6e8c74;font-style:normal">)</span></div>
</body></html>
